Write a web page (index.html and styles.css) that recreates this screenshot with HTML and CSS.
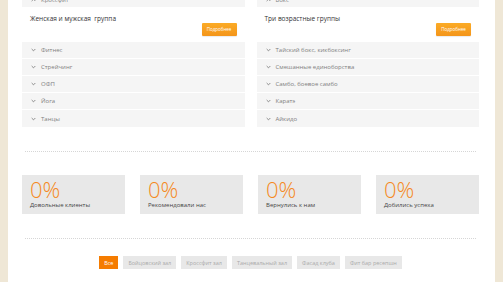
FILE: index.html
```html
<!DOCTYPE html>
<html lang="ru">
<head>
  <meta charset="UTF-8">
  <title>Направления</title>
  <link rel="stylesheet" href="styles.css">
</head>
<body>
  <div class="page">
    <!-- направления -->
    <div class="groups">
      <div class="panel">
        <div class="acc-head"><svg class="chev up" viewBox="0 0 6 4"><path d="M.8 3.2 3 1l2.2 2.2"/></svg>Кроссфит</div>
        <div class="acc-body">
          <p>Женская и мужская&nbsp; группа</p>
          <a class="btn-more" href="#">Подробнее</a>
        </div>
        <div class="acc-head"><svg class="chev" viewBox="0 0 6 4"><path d="M.8.8 3 3l2.2-2.2"/></svg>Фитнес</div>
        <div class="acc-head"><svg class="chev" viewBox="0 0 6 4"><path d="M.8.8 3 3l2.2-2.2"/></svg>Стрейчинг</div>
        <div class="acc-head"><svg class="chev" viewBox="0 0 6 4"><path d="M.8.8 3 3l2.2-2.2"/></svg>ОФП</div>
        <div class="acc-head"><svg class="chev" viewBox="0 0 6 4"><path d="M.8.8 3 3l2.2-2.2"/></svg>Йога</div>
        <div class="acc-head"><svg class="chev" viewBox="0 0 6 4"><path d="M.8.8 3 3l2.2-2.2"/></svg>Танцы</div>
      </div>
      <div class="panel">
        <div class="acc-head"><svg class="chev up" viewBox="0 0 6 4"><path d="M.8 3.2 3 1l2.2 2.2"/></svg>Бокс</div>
        <div class="acc-body">
          <p>Три возрастные группы</p>
          <a class="btn-more" href="#">Подробнее</a>
        </div>
        <div class="acc-head"><svg class="chev" viewBox="0 0 6 4"><path d="M.8.8 3 3l2.2-2.2"/></svg>Тайский бокс, кикбоксинг</div>
        <div class="acc-head"><svg class="chev" viewBox="0 0 6 4"><path d="M.8.8 3 3l2.2-2.2"/></svg>Смешанные единоборства</div>
        <div class="acc-head"><svg class="chev" viewBox="0 0 6 4"><path d="M.8.8 3 3l2.2-2.2"/></svg>Самбо, боевое самбо</div>
        <div class="acc-head"><svg class="chev" viewBox="0 0 6 4"><path d="M.8.8 3 3l2.2-2.2"/></svg>Каратэ</div>
        <div class="acc-head"><svg class="chev" viewBox="0 0 6 4"><path d="M.8.8 3 3l2.2-2.2"/></svg>Айкидо</div>
      </div>
    </div>

    <hr class="dots">

    <!-- счетчики -->
    <div class="stats">
      <div class="stat"><div class="num">0%</div><div class="label">Довольные клиенты</div></div>
      <div class="stat"><div class="num">0%</div><div class="label">Рекомендовали нас</div></div>
      <div class="stat"><div class="num">0%</div><div class="label">Вернулись к нам</div></div>
      <div class="stat"><div class="num">0%</div><div class="label">Добились успеха</div></div>
    </div>

    <hr class="dots last">

    <!-- фильтр галереи -->
    <div class="filters">
      <button class="active">Все</button>
      <button>Бойцовский зал</button>
      <button>Кроссфит зал</button>
      <button>Танцевальный зал</button>
      <button>Фасад клуба</button>
      <button>Фит бар ресепшн</button>
    </div>
  </div>
</body>
</html>
```

FILE: styles.css
```css
:root {
  --orange: #f58a1f;
  --beige: #efe7d6;
  --grey: #e8e8e8;
}
* { box-sizing: border-box; margin: 0; padding: 0; }
body {
  background: var(--beige);
  font-family: "Open Sans", "DejaVu Sans", sans-serif;
  color: #333;
  height: 282px;
  overflow: hidden;
}

.page {
  width: 487px;
  margin: -8px 0 0 8px;
  background: #fff;
  padding: 0 16px 20px 14px;
  min-height: 320px;
}

.groups {
  display: grid;
  grid-template-columns: 1fr 1fr;
  gap: 12px;
}
.panel { background: #f5f5f5; }

.acc-head {
  height: 17px;
  font-size: 6px;
  color: #808080;
  padding-left: 9px;
  border-bottom: 1px solid #fff;
  display: flex;
  align-items: center;
  gap: 5px;
}
.acc-head:first-child { height: 16px; }
.acc-head:last-child { border-bottom: none; }
.chev {
  width: 5px;
  height: 4px;
  fill: none;
  stroke: #777;
  stroke-width: 1;
}

.acc-body {
  background: #fff;
  padding: 6px 8px 6px 8px;
  display: flex;
  flex-direction: column;
}
.acc-body p {
  font-size: 6.5px;
  line-height: 9px;
  color: #333;
}
.btn-more {
  align-self: flex-end;
  width: 35px;
  height: 13px;
  line-height: 13px;
  text-align: center;
  font-size: 4.5px;
  color: #fff;
  text-decoration: none;
  background: linear-gradient(#fbab26, #f4951a);
  border-radius: 1px;
  box-shadow: 0 1px 1px rgba(0,0,0,0.08);
}

.dots {
  border: none;
  border-top: 1px dotted #d6d6d6;
  margin: 24px 3px 23px 3px;
}
.dots.last { margin-bottom: 17px; }

.stats {
  display: grid;
  grid-template-columns: repeat(4, 1fr);
  gap: 15px;
}
.stat {
  background: var(--grey);
  height: 39px;
  padding: 2px 8px 0 8px;
}
.stat .num {
  font-size: 22px;
  font-weight: 300;
  line-height: 24px;
  color: var(--orange);
}
.stat .label {
  font-size: 6px;
  line-height: 8px;
  color: #444;
}

.filters {
  display: flex;
  justify-content: center;
  gap: 5px;
}
.filters button {
  font-family: inherit;
  border: none;
  height: 13px;
  padding: 0 5px;
  font-size: 5.5px;
  color: #aaa;
  background: var(--grey);
}
.filters button.active {
  background: #f57c00;
  color: #fff;
}
```
